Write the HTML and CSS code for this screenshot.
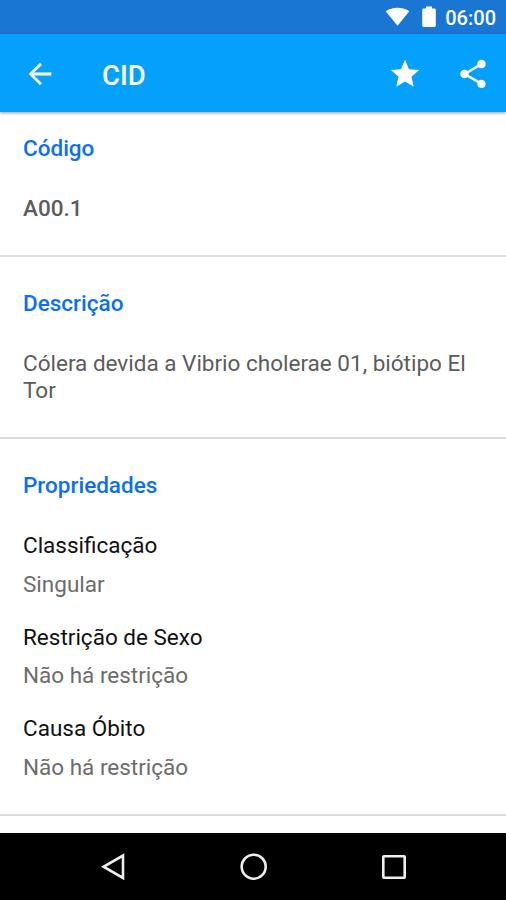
FILE: index.html
```
<!DOCTYPE html>
<html lang="pt-BR">
<head>
    <meta charset="UTF-8">
    <meta name="viewport" content="width=device-width, initial-scale=1.0">
    <title>CID</title>
    <link rel="stylesheet" href="styles.css">
</head>
<body>

    <div class="status-bar">
        <svg class="wifi-icon" width="25" height="20" viewBox="0 0 26 20">
            <path d="M13 19.2L0.7 4.1C4 1.7 8.3.4 13 .4s9 1.3 12.3 3.7z"/>
        </svg>
        <svg class="battery-icon" width="14" height="22" viewBox="0 0 14 22">
            <path d="M4 0.5h6v2h2.4c.8 0 1.4.6 1.4 1.4v15.7c0 .8-.6 1.4-1.4 1.4H1.6c-.8 0-1.4-.6-1.4-1.4V3.9c0-.8.6-1.4 1.4-1.4H4z"/>
        </svg>
        <span class="clock">06:00</span>
    </div>

    <header class="app-bar">
        <button type="button" class="icon-button" aria-label="Voltar">
            <svg width="34" height="34" viewBox="0 0 24 24">
                <path d="M20 11H7.83l5.59-5.59L12 4l-8 8 8 8 1.41-1.41L7.83 13H20v-2z"/>
            </svg>
        </button>
        <h1>CID</h1>
        <button type="button" class="icon-button" aria-label="Favorito">
            <svg width="34" height="34" viewBox="0 0 24 24">
                <path d="M12 17.27L18.18 21l-1.64-7.03L22 9.24l-7.19-.61L12 2 9.19 8.63 2 9.24l5.46 4.73L5.82 21z"/>
            </svg>
        </button>
        <button type="button" class="icon-button share-button" aria-label="Compartilhar">
            <svg width="34" height="34" viewBox="0 0 24 24">
                <path d="M18 16.08c-.76 0-1.44.3-1.96.77L8.91 12.7c.05-.23.09-.46.09-.7s-.04-.47-.09-.7l7.05-4.11c.54.5 1.25.81 2.04.81 1.66 0 3-1.34 3-3s-1.34-3-3-3-3 1.34-3 3c0 .24.04.47.09.7L8.04 9.81C7.5 9.31 6.79 9 6 9c-1.66 0-3 1.34-3 3s1.34 3 3 3c.79 0 1.5-.31 2.04-.81l7.12 4.16c-.05.21-.08.43-.08.65 0 1.61 1.31 2.92 2.92 2.92s2.92-1.31 2.92-2.92-1.31-2.92-2.92-2.92z"/>
            </svg>
        </button>
    </header>

    <main class="content">
        <section class="section">
            <h2>Código</h2>
            <p class="code">A00.1</p>
        </section>
        <section class="section">
            <h2>Descrição</h2>
            <p>Cólera devida a Vibrio cholerae 01, biótipo El Tor</p>
        </section>
        <section class="section">
            <h2>Propriedades</h2>
            <dl class="properties">
                <div class="property">
                    <dt>Classificação</dt>
                    <dd>Singular</dd>
                </div>
                <div class="property">
                    <dt>Restrição de Sexo</dt>
                    <dd>Não há restrição</dd>
                </div>
                <div class="property">
                    <dt>Causa Óbito</dt>
                    <dd>Não há restrição</dd>
                </div>
            </dl>
        </section>
    </main>

    <nav class="nav-bar">
        <svg width="34" height="34" viewBox="0 0 34 34">
            <path d="M26 5.5v22.5L6.500 16.75z"/>
        </svg>
        <svg width="34" height="34" viewBox="0 0 34 34">
            <circle cx="16.7" cy="16.7" r="12"/>
        </svg>
        <svg width="34" height="34" viewBox="0 0 34 34">
            <rect x="6.300" y="6.300" width="21.4" height="21.4" rx="0.5"/>
        </svg>
    </nav>

</body>
</html>
```

FILE: styles.css
```
/* Reset and Body Styling */
* {
    margin: 0;
    padding: 0;
    box-sizing: border-box;
}
body {
    font-family: Roboto, 'Liberation Sans', sans-serif;
    font-size: 22.5px;
    line-height: 27px;
    background-color: #ffffff;
    color: #5c5c5c;
    display: flex;
    flex-direction: column;
    height: 100vh;
    overflow: hidden;
}

/* Status Bar */
.status-bar {
    display: flex;
    justify-content: flex-end;
    align-items: center;
    height: 34px;
    padding-right: 10px;
    background-color: #1976d2;
    color: #ffffff;
    fill: #ffffff;
}
.battery-icon {
    margin: 0 9px 0 12px;
}
.clock {
    font-size: 20px;
    font-weight: 500;
    padding-top: 2px;
}

/* App Bar */
.app-bar {
    display: flex;
    align-items: center;
    height: 78px;
    padding: 1px 16px 0 23px;
    background-color: #03a1fc;
    color: #ffffff;
    box-shadow: 0 1px 3px rgba(0, 0, 0, 0.4);
}
.app-bar h1 {
    flex: 1;
    margin-left: 45px;
    padding-top: 3px;
    font-size: 27.5px;
    font-weight: 500;
}
.icon-button {
    width: 34px;
    height: 34px;
    border: none;
    background: none;
    fill: #ffffff;
    cursor: pointer;
}
.share-button {
    margin-left: 34px;
}

/* Content */
.content {
    flex: 1;
}
.section {
    padding: 33px 23px 33px;
    border-bottom: 2px solid #dcdcdc;
}
.section:first-child {
    padding-top: 23px;
}
.section h2 {
    margin-bottom: 33px;
    font-size: 22.5px;
    font-weight: 500;
    color: #0b6ff5;
}
.code {
    font-weight: 500;
}

/* Properties */
.property + .property {
    margin-top: 26px;
}
.property dt {
    margin-bottom: 11.5px;
    color: #111111;
}
.property dd {
    color: #6c6c6c;
}

/* Navigation Bar */
.nav-bar {
    display: flex;
    justify-content: center;
    align-items: center;
    gap: 106px;
    height: 67px;
    padding-left: 2px;
    background-color: #000000;
    fill: none;
    stroke: #eeeeee;
    stroke-width: 2.6;
}
```
